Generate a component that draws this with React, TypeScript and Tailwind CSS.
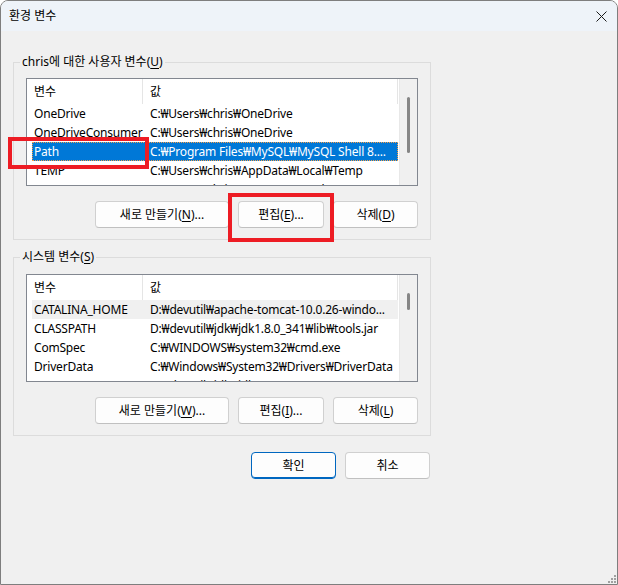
import React from "react";

type RowProps = { name: string; value: string; selected?: boolean; hover?: boolean };

function Row({ name, value, selected, hover }: RowProps) {
  const base = "flex h-[19px] items-center ml-[5px] w-[366px] shrink-0 tracking-[-0.2px]";
  const cls = selected
    ? base + " bg-[#0078d7] text-white outline-1 outline-dotted outline-[#f5a04a] -outline-offset-1"
    : hover
    ? base + " bg-[#f0f0f0]"
    : base;
  return (
    <div className={cls}>
      <div className="w-[111px] shrink-0 pl-[2px] whitespace-nowrap overflow-hidden">{name}</div>
      <div className="flex-1 pl-[7px] whitespace-nowrap overflow-hidden">{value}</div>
    </div>
  );
}

function ListBox({ rows, thumbTop, thumbHeight }: { rows: RowProps[]; thumbTop: number; thumbHeight: number }) {
  return (
    <div className="flex h-[108px] w-[392px] border border-[#828790] bg-white overflow-hidden">
      <div className="flex flex-1 flex-col overflow-hidden">
        <div className="flex h-[25px] shrink-0 items-center ml-[5px] w-[366px] border-r border-[#e5e5e5]">
          <div className="w-[111px] h-full flex items-center pl-[2px] border-r border-[#e5e5e5]">변수</div>
          <div className="pl-[7px]">값</div>
        </div>
        {rows.map((r, i) => (
          <Row key={i} {...r} />
        ))}
      </div>
      <div className="relative w-[18px] shrink-0 bg-[#f0f0f0] border-l border-[#e8e8e8]">
        <div
          className="absolute left-[7px] w-[3px] rounded-full bg-[#868686]"
          style={{ top: thumbTop, height: thumbHeight }}
        />
      </div>
    </div>
  );
}

function Btn({ children, w, primary }: { children: React.ReactNode; w: string; primary?: boolean }) {
  return (
    <div
      className={
        "flex h-[27px] items-center justify-center rounded-[4px] bg-[#fdfdfd] " +
        w +
        (primary ? " border border-[#0067c0] shadow-[inset_0_-1px_0_#0067c0]" : " border border-[#d0d0d0] border-b-[#c0c0c0]")
      }
    >
      {children}
    </div>
  );
}

function U({ children }: { children: React.ReactNode }) {
  return <span className="underline underline-offset-2">{children}</span>;
}

export default function App() {
  const userRows: RowProps[] = [
    { name: "OneDrive", value: "C:₩Users₩chris₩OneDrive" },
    { name: "OneDriveConsumer", value: "C:₩Users₩chris₩OneDrive" },
    { name: "Path", value: "C:₩Program Files₩MySQL₩MySQL Shell 8....", selected: true },
    { name: "TEMP", value: "C:₩Users₩chris₩AppData₩Local₩Temp" },
    { name: "TMP", value: "C:₩Users₩chris₩AppData₩Local₩Temp" },
  ];
  const sysRows: RowProps[] = [
    { name: "CATALINA_HOME", value: "D:₩devutil₩apache-tomcat-10.0.26-windo...", hover: true },
    { name: "CLASSPATH", value: "D:₩devutil₩jdk₩jdk1.8.0_341₩lib₩tools.jar" },
    { name: "ComSpec", value: "C:₩WINDOWS₩system32₩cmd.exe" },
    { name: "DriverData", value: "C:₩Windows₩System32₩Drivers₩DriverData" },
    { name: "JAVA_HOME", value: "D:₩devutil₩jdk₩jdk1.8.0_341" },
  ];

  return (
    <div className="relative flex h-[585px] w-[618px] flex-col overflow-hidden rounded-t-[8px] border border-[#7e7e7e] bg-[#f0f0f0] text-[12px] leading-[16px] text-black font-['Noto_Sans','Noto_Sans_CJK_KR',sans-serif]">
      {/* title bar */}
      <div className="flex h-[30px] shrink-0 items-center justify-between bg-[#eef3f9] pl-[8px] pr-[9px]">
        <span className="text-[12px]">환경 변수</span>
        <svg width="11" height="11" viewBox="0 0 11 11" className="mr-[1px]">
          <path d="M0.5 0.5 L10.5 10.5 M10.5 0.5 L0.5 10.5" stroke="#1a1a1a" strokeWidth="1" />
        </svg>
      </div>

      {/* body */}
      <div className="flex flex-col px-[12px]">
        <fieldset className="mt-[23px] w-[418px] border border-[#dcdcdc] px-[12px] pb-[11px]">
          <legend className="ml-[-6px] px-[2px]">
            chris에 대한 사용자 변수(<U>U</U>)
          </legend>
          <div className="mt-[8px]">
            <ListBox rows={userRows} thumbTop={18} thumbHeight={56} />
          </div>
          <div className="mt-[15px] flex justify-end gap-[9px]">
            <Btn w="w-[134px]">
              새로 만들기(<U>N</U>)...
            </Btn>
            <Btn w="w-[86px]">
              편집(<U>E</U>)...
            </Btn>
            <Btn w="w-[85px]">
              삭제(<U>D</U>)
            </Btn>
          </div>
        </fieldset>

        <fieldset className="mt-[9px] w-[418px] border border-[#dcdcdc] px-[12px] pb-[11px]">
          <legend className="ml-[-6px] px-[2px]">
            시스템 변수(<U>S</U>)
          </legend>
          <div className="mt-[9px]">
            <ListBox rows={sysRows} thumbTop={18} thumbHeight={17} />
          </div>
          <div className="mt-[15px] flex justify-end gap-[9px]">
            <Btn w="w-[134px]">
              새로 만들기(<U>W</U>)...
            </Btn>
            <Btn w="w-[86px]">
              편집(<U>I</U>)...
            </Btn>
            <Btn w="w-[85px]">
              삭제(<U>L</U>)
            </Btn>
          </div>
        </fieldset>

        <div className="mt-[16px] flex w-[417px] justify-end gap-[9px]">
          <Btn w="w-[85px]" primary>
            확인
          </Btn>
          <Btn w="w-[85px]">취소</Btn>
        </div>
      </div>

      {/* annotation rectangles */}
      <div className="pointer-events-none absolute left-[7px] top-[136px] h-[32px] w-[141px] border-[4px] border-[#ed1c24]" />
      <div className="pointer-events-none absolute left-[227px] top-[192px] h-[49px] w-[106px] border-[4px] border-[#ed1c24]" />

      {/* resize grip */}
      <svg className="absolute bottom-[1px] right-[1px]" width="9" height="9" viewBox="0 0 9 9">
        <rect x="7" y="1" width="2" height="2" fill="#a0a0a0" />
        <rect x="4" y="4" width="2" height="2" fill="#a0a0a0" />
        <rect x="7" y="4" width="2" height="2" fill="#a0a0a0" />
        <rect x="1" y="7" width="2" height="2" fill="#a0a0a0" />
        <rect x="4" y="7" width="2" height="2" fill="#a0a0a0" />
        <rect x="7" y="7" width="2" height="2" fill="#a0a0a0" />
      </svg>
    </div>
  );
}
